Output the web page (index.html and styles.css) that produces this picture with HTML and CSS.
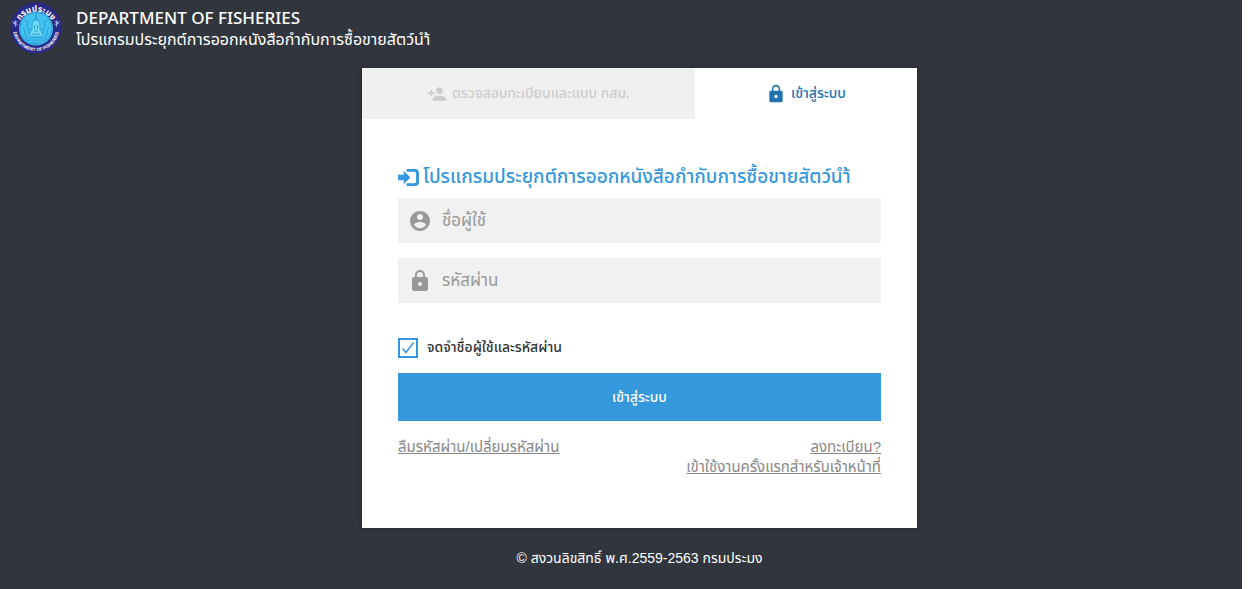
FILE: index.html
```html
<!DOCTYPE html>
<html lang="th">
<head>
<meta charset="utf-8">
<meta name="viewport" content="width=device-width, initial-scale=1">
<title>กรมประมง</title>
<link rel="stylesheet" href="styles.css">
</head>
<body>
<header class="site-header">
  <svg class="logo" viewBox="0 0 104 104" role="img" aria-label="กรมประมง">
    <defs>
      <path id="arc-top" d="M15 56 A37 37 0 1 1 89 56"/>
      <path id="arc-bottom" d="M6 52 A46 46 0 0 0 98 52"/>
    </defs>
    <circle cx="52" cy="52" r="51" fill="#292a87"/>
    <circle cx="52" cy="53" r="34" fill="#42c3ef"/>
    <circle cx="52" cy="53" r="32" fill="none" stroke="#2b8fd0" stroke-width="1.5"/>
    <g fill="none" stroke="#2a9bd4" stroke-width="2">
      <path d="M52 22v10M45 40q7-14 14 0M43 44h18M41 65q11-20 22 0M44 53l-7 6 5 8M60 53l7 6-5 8M38 71h28M35 76h34M42 82h20"/>
      <path d="M30 37q8 0 5 9t6 8M74 37q-8 0-5 9t-6 8M26 52q6 4 3 13M78 52q-6 4-3 13M32 65q-2 8 4 12M72 65q2 8-4 12"/>
    </g>
    <path d="M46 44q6-17 12 0v11l7 12H39l7-12z" fill="#7ddcf5"/>
    <path d="M52 28v11M49 46v8m6-8v8M44 64h16M48 58h8" stroke="#279bce" stroke-width="2" fill="none"/>
    <path d="M5 38q5 7 10 0m-9 6q5-5 9 2m-4-9v12M99 38q-5 7-10 0m9 6q-5-5-9 2m4-9v12" stroke="#aeb6e0" stroke-width="2" fill="none"/>
    <text class="seal-thai"><textPath href="#arc-top" startOffset="50%" text-anchor="middle">กรมประมง</textPath></text>
    <text class="seal-latin"><textPath href="#arc-bottom" startOffset="50%" text-anchor="middle">DEPARTMENT OF FISHERIES</textPath></text>
  </svg>
  <div class="brand">
    <div class="brand-en">DEPARTMENT OF FISHERIES</div>
    <div class="brand-th">โปรแกรมประยุกต์การออกหนังสือกำกับการซื้อขายสัตว์นำ้</div>
  </div>
</header>
<main class="main">
  <section class="card">
    <nav class="tabs">
      <a class="tab" href="#check">
        <svg class="tab-icon" viewBox="0 0 24 24" aria-hidden="true"><path d="M15 12c2.210 0 4-1.790 4-4s-1.790-4-4-4-4 1.790-4 4 1.790 4 4 4zm-9-2V7H4v3H1v2h3v3h2v-3h3v-2H6zm9 4c-2.670 0-8 1.340-8 4v2h16v-2c0-2.660-5.330-4-8-4z"/></svg>
        <span>ตรวจสอบทะเบียนและแบบ กสน.</span>
      </a>
      <a class="tab tab-active" href="#login" aria-current="page">
        <svg class="tab-icon" viewBox="0 0 24 24" aria-hidden="true"><path d="M18 8h-1V6c0-2.760-2.240-5-5-5S7 3.240 7 6v2H6c-1.100 0-2 .9-2 2v10c0 1.100.9 2 2 2h12c1.100 0 2-.9 2-2V10c0-1.100-.9-2-2-2zm-6 9c-1.100 0-2-.9-2-2s.9-2 2-2 2 .9 2 2-.9 2-2 2zm3.100-9H8.900V6c0-1.710 1.390-3.100 3.100-3.100s3.100 1.390 3.100 3.100v2z"/></svg>
        <span>เข้าสู่ระบบ</span>
      </a>
    </nav>
    <form class="login" id="login">
      <h1 class="title">
        <svg class="title-icon" viewBox="0 0 22 20" aria-hidden="true"><path d="M0 7h6V3l7 7-7 7v-4H0z"/><path d="M9 1h9q4 0 4 4v10q0 4-4 4H9v-3h8q2 0 2-2V6q0-2-2-2H9z"/></svg>
        <span>โปรแกรมประยุกต์การออกหนังสือกำกับการซื้อขายสัตว์นำ้</span>
      </h1>
      <label class="field">
        <svg class="field-icon" viewBox="0 0 24 24" aria-hidden="true"><path d="M12 2C6.480 2 2 6.480 2 12s4.480 10 10 10 10-4.480 10-10S17.520 2 12 2zm0 3c1.660 0 3 1.340 3 3s-1.340 3-3 3-3-1.340-3-3 1.340-3 3-3zm0 14.200c-2.500 0-4.710-1.280-6-3.220.03-1.990 4-3.080 6-3.080 1.990 0 5.970 1.090 6 3.080-1.290 1.940-3.500 3.220-6 3.220z"/></svg>
        <input class="field-input" type="text" placeholder="ชื่อผู้ใช้" aria-label="ชื่อผู้ใช้">
      </label>
      <label class="field">
        <svg class="field-icon" viewBox="0 0 24 24" aria-hidden="true"><path d="M18 8h-1V6c0-2.760-2.240-5-5-5S7 3.240 7 6v2H6c-1.100 0-2 .9-2 2v10c0 1.100.9 2 2 2h12c1.100 0 2-.9 2-2V10c0-1.100-.9-2-2-2zm-6 9c-1.100 0-2-.9-2-2s.9-2 2-2 2 .9 2 2-.9 2-2 2zm3.100-9H8.900V6c0-1.710 1.390-3.100 3.100-3.100s3.100 1.390 3.100 3.100v2z"/></svg>
        <input class="field-input" type="password" placeholder="รหัสผ่าน" aria-label="รหัสผ่าน">
      </label>
      <label class="remember">
        <span class="check">
          <input class="check-input" type="checkbox" checked>
          <svg class="check-mark" viewBox="0 0 20 20" aria-hidden="true"><path d="M4.500 10.500l3.500 4 7.500-10"/></svg>
        </span>
        <span>จดจำชื่อผู้ใช้และรหัสผ่าน</span>
      </label>
      <button class="submit" type="submit">เข้าสู่ระบบ</button>
      <div class="links">
        <a class="link" href="#forgot">ลืมรหัสผ่าน/เปลี่ยนรหัสผ่าน</a>
        <div class="links-right">
          <a class="link" href="#register">ลงทะเบียน?</a>
          <a class="link" href="#officer">เข้าใช้งานครั้งแรกสำหรับเจ้าหน้าที่</a>
        </div>
      </div>
    </form>
  </section>
  <footer class="footer">© สงวนลิขสิทธิ์ พ.ศ.2559-2563 กรมประมง</footer>
</main>
</body>
</html>
```
FILE: styles.css
```css
* { box-sizing: border-box; }
html { background: #fff; }
body {
  margin: 0 9px 0 0;
  min-height: 100vh;
  background: #31353d;
  color: #fff;
  font-family: "Noto Sans Thai", "Noto Sans", "Liberation Sans", sans-serif;
  font-size: 14px;
}
.site-header { display: flex; gap: 14px; padding: 2px 10px 0; height: 68px; }
.logo { width: 52px; height: 52px; }
.seal-thai { fill: #fff; font-size: 17px; font-weight: 700; }
.seal-latin { fill: #fff; font-family: "Liberation Sans", sans-serif; font-size: 9px; font-weight: 700; }
.brand { padding-top: 7px; white-space: nowrap; }
.brand-en { font-size: 17px; font-weight: 500; line-height: 20px; }
.brand-th { font-size: 16px; line-height: 22px; }
.main { display: flex; flex-direction: column; align-items: center; padding-left: 37px; }
.card { width: 100%; max-width: 555px; background: #fff; box-shadow: 0 0 4px #22262c; }
.tabs { display: grid; grid-template-columns: 3fr 2fr; }
.tab {
  display: flex; align-items: center; justify-content: center; gap: 5px;
  height: 51px; background: #f0f0f0; color: #ccc; font-weight: 500; text-decoration: none; white-space: nowrap;
}
.tab-active { background: #fff; color: #2272ae; }
.tab-icon { width: 20px; height: 20px; fill: currentColor; }
.login { padding: 45px 36px 51px; }
.title {
  display: flex; align-items: center; gap: 4px; margin: 0 0 7px;
  color: #3598dc; font-size: 19px; font-weight: 500; line-height: 27px; white-space: nowrap;
}
.title-icon { width: 21px; height: 19px; fill: currentColor; }
.field { display: flex; align-items: center; gap: 10px; height: 45px; margin-bottom: 15px; padding-left: 10px; background: #f1f1f1; }
.field-icon { flex: none; width: 24px; height: 24px; fill: #999; }
.field-input { flex: 1; min-width: 0; height: 45px; padding: 0; border: 0; outline: 0; background: none; color: #555; font-family: inherit; font-size: 17px; }
.field-input::placeholder { color: #999; opacity: 1; }
.remember { display: flex; align-items: center; gap: 9px; margin: 32px 0 12px; color: #333; font-weight: 500; line-height: 26px; }
.check { display: grid; }
.check-input, .check-mark { grid-area: 1 / 1; width: 20px; height: 20px; margin: 0; }
.check-input { appearance: none; border: 2px solid #3598dc; background: #fff; }
.check-mark { fill: none; stroke: #3598dc; stroke-width: 1.500; pointer-events: none; }
.submit { display: block; width: 100%; height: 48px; padding: 0; border: 0; background: #3598dc; color: #fff; font-family: inherit; font-size: 14px; font-weight: 500; }
.links { display: flex; justify-content: space-between; padding-top: 16px; font-family: "Liberation Sans", "Noto Sans Thai", sans-serif; font-size: 15px; line-height: 20px; }
.links-right { display: flex; flex-direction: column; align-items: flex-end; }
.link { color: #888; white-space: nowrap; }
.footer { padding: 20px 0; font-family: "Liberation Sans", "Noto Sans Thai", sans-serif; line-height: 20px; }
```
